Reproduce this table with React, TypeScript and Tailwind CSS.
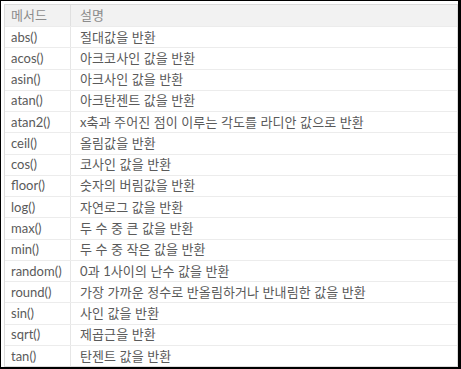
import React from "react";

const rows: [string, string][] = [
  ["abs()", "절대값을 반환"],
  ["acos()", "아크코사인 값을 반환"],
  ["asin()", "아크사인 값을 반환"],
  ["atan()", "아크탄젠트 값을 반환"],
  ["atan2()", "x축과 주어진 점이 이루는 각도를 라디안 값으로 반환"],
  ["ceil()", "올림값을 반환"],
  ["cos()", "코사인 값을 반환"],
  ["floor()", "숫자의 버림값을 반환"],
  ["log()", "자연로그 값을 반환"],
  ["max()", "두 수 중 큰 값을 반환"],
  ["min()", "두 수 중 작은 값을 반환"],
  ["random()", "0과 1사이의 난수 값을 반환"],
  ["round()", "가장 가까운 정수로 반올림하거나 반내림한 값을 반환"],
  ["sin()", "사인 값을 반환"],
  ["sqrt()", "제곱근을 반환"],
  ["tan()", "탄젠트 값을 반환"],
];

export default function App() {
  return (
    <div
      className="w-[461px] h-[369px] bg-white border-l border-t border-r-[3px] border-b-[2px] border-black pl-[3px] pt-[3px] overflow-hidden"
      style={{ fontFamily: 'Lato, "Noto Sans CJK KR", sans-serif' }}
    >
      <div className="border border-[#dcdcdc] text-[13px] text-[#5a5a5a]">
        <div className="flex h-[21px] bg-[#f2f2f2] text-[#8c8c8c] items-center">
          <div className="w-[66px] pl-[6px] border-r border-[#e0e0e0] h-full flex items-center">메서드</div>
          <div className="pl-[9px] flex items-center">설명</div>
        </div>
        {rows.map(([m, d]) => (
          <div key={m} className="flex h-[21.27px] border-t border-[#ececec] items-center">
            <div className="w-[66px] pl-[6px] border-r border-[#e6e6e6] h-full flex items-center leading-none">{m}</div>
            <div className="pl-[9px] flex items-center leading-none whitespace-nowrap tracking-[0.1px]">{d}</div>
          </div>
        ))}
      </div>
    </div>
  );
}
